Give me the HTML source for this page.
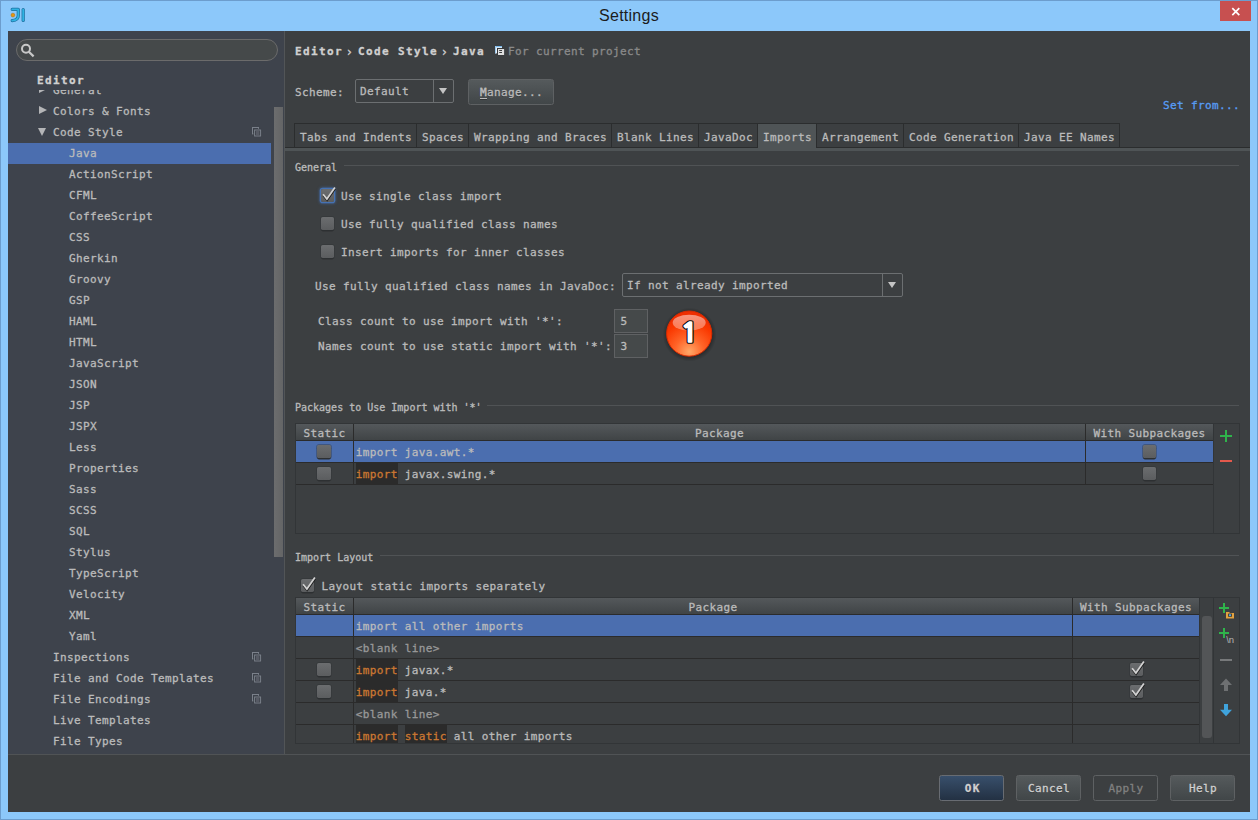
<!DOCTYPE html>
<html>
<head>
<meta charset="utf-8">
<title>Settings</title>
<style>
html,body{margin:0;padding:0;}
body{width:1258px;height:820px;overflow:hidden;background:#8cc8fa;position:relative;
 font-family:"DejaVu Sans Mono","Liberation Mono",monospace;font-size:11px;letter-spacing:0.378px;color:#bbbbbb;-webkit-text-stroke:0.3px;}
.abs{position:absolute;}
.t{position:absolute;white-space:pre;line-height:14px;height:14px;}
.b{font-weight:bold;letter-spacing:1.378px;}
.sm{font-size:10px;letter-spacing:0;}
#frame{position:absolute;left:0;top:0;width:1256px;height:818px;border:1px solid #6c9dcd;}
#title{position:absolute;left:0;top:5px;width:1258px;text-align:center;font-family:"Liberation Sans",sans-serif;font-size:16px;letter-spacing:0.25px;color:#1c1c1c;line-height:22px;-webkit-text-stroke:0;}
#close{position:absolute;left:1220px;top:1px;width:31px;height:20px;background:#c75050;}
#content{position:absolute;left:8px;top:31px;width:1242px;height:781px;background:#3c3f41;overflow:hidden;}
#abs0{position:absolute;left:-8px;top:-31px;width:1258px;height:820px;}
#side{position:absolute;left:8px;top:31px;width:276px;height:723px;background:#3e434c;overflow:hidden;}
#side2{position:absolute;left:-8px;top:-31px;width:1258px;height:820px;}
#search{position:absolute;left:16px;top:39px;width:260px;height:20px;border:1px solid #6b6b6b;border-radius:11px;background:#45494a;}
.row{position:absolute;left:8px;width:263px;height:21px;line-height:21px;white-space:pre;}
.row .rt{position:absolute;top:0;margin-left:-8px;}
.row i{position:absolute;margin-left:-8px;}
.row .pi{position:absolute;left:244px;top:5px;}
.sel{background:#4b6eaf;}
.ar{top:5px;width:0;height:0;border-left:8px solid #b4b5b7;border-top:4.75px solid transparent;border-bottom:4.75px solid transparent;}
.ad{top:6px;width:0;height:0;border-top:8px solid #b4b5b7;border-left:4.7px solid transparent;border-right:4.7px solid transparent;}
#edhdr{position:absolute;left:8px;top:66px;width:263px;height:24px;background:#3e434c;}
#sthumb{position:absolute;left:274px;top:107px;width:9px;height:450px;background:linear-gradient(90deg,#6c6d6e,#646566);}

.cb{position:absolute;width:13.2px;height:13px;margin:-0.4px 0 0 -0.2px;border-radius:1.8px;background:linear-gradient(#6b6d6f,#5b5d5f);box-shadow:0 0 0 0.7px rgba(46,49,51,0.5),0 1.4px 0.5px #2e3032;}
.combo{position:absolute;border:1px solid #6c6f71;border-radius:2px;background:#3c3f41;box-sizing:border-box;}
.combo .sep{position:absolute;top:0;bottom:0;width:1px;background:#6c6f71;}
.combo .arr{position:absolute;width:0;height:0;border-top:6px solid #c4c4c4;border-left:4px solid transparent;border-right:4px solid transparent;}
.btn{text-shadow:0 1px 0 rgba(0,0,0,0.3);position:absolute;box-sizing:border-box;border:1px solid #5e6163;border-radius:2.5px;background:linear-gradient(#555a5c,#414648);text-align:center;white-space:pre;padding-left:1px;}
.tab{position:absolute;top:123px;height:25px;box-sizing:border-box;border:1px solid #2b2d2e;border-right:none;line-height:27px;padding-left:5px;white-space:pre;}
.hl{position:absolute;height:1px;background:#505355;}
.tf{position:absolute;box-sizing:border-box;border:1px solid #5f6163;background:#45494a;}

.th{position:absolute;height:16px;border-bottom:1px solid #2b2b2b;background:linear-gradient(#54585b,#404446);line-height:19px;white-space:pre;text-align:center;}
.tr{position:absolute;height:21px;border-bottom:1px solid #2b2b2b;}
.kw{color:#cc7832;background:#2b2b2b;display:inline-block;height:21px;}
.cell{position:absolute;white-space:pre;line-height:23px;height:21px;}
.vl{position:absolute;width:1px;background:#2b2b2b;}
.tbl{position:absolute;box-sizing:border-box;border:1px solid #323537;}
</style>
</head>
<body>
<div id="frame"></div>
<div id="title">Settings</div>
<div id="close"><svg width="31" height="20" viewBox="0 0 31 20" style="position:absolute;left:0;top:0"><path d="M12.3 7.2L19.3 14.2M19.3 7.2L12.3 14.2" stroke="#fff" stroke-width="1.7"/></svg></div>
<svg class="abs" style="left:9px;top:6px" width="18" height="18" viewBox="0 0 18 18"><path d="M3.2 3.3H9.3V9.5C9.3 12.8 6.5 14.3 3.2 14.6" fill="none" stroke="#1d6e9e" stroke-width="3.2" stroke-linecap="round" stroke-linejoin="round"/><path d="M3.2 3.3H9.3V9.5C9.3 12.8 6.5 14.3 3.2 14.6" fill="none" stroke="#2fb2e2" stroke-width="1.8" stroke-linecap="round" stroke-linejoin="round"/><path d="M14.2 3.6V14.4" stroke="#1d6e9e" stroke-width="3.2" stroke-linecap="round"/><path d="M14.2 3.6V14.4" stroke="#2fb2e2" stroke-width="1.8" stroke-linecap="round"/><circle cx="3.9" cy="9.1" r="1.9" fill="#e8960c" stroke="#a86a10" stroke-width="0.5"/></svg>
<div id="content"><div id="abs0">
 <div id="side"><div id="side2">
  <div id="search"><svg width="20" height="20" viewBox="0 0 20 20" style="position:absolute;left:2px;top:0"><circle cx="7" cy="8.8" r="4" fill="none" stroke="#c8c8c8" stroke-width="2"/><path d="M9.8 11.8L14.6 16.4" stroke="#c8c8c8" stroke-width="2.2"/></svg></div>
<div class="row" style="top:80px"><span class="rt" style="left:53px">General</span><i class="ar" style="left:39px"></i></div>
<div class="row" style="top:101px"><span class="rt" style="left:53px">Colors &amp; Fonts</span><i class="ar" style="left:39px"></i></div>
<div class="row" style="top:122px"><span class="rt" style="left:53px">Code Style</span><i class="ad" style="left:38px"></i><svg class="pi" width="10" height="10" viewBox="0 0 10 10"><rect x="0.5" y="0.5" width="6" height="6.4" fill="none" stroke="#7a808a"/><rect x="1.4" y="1.8" width="8" height="8" fill="#3b3f47"/><rect x="2.6" y="3" width="6" height="6" fill="none" stroke="#7a808a"/><path d="M4 5h3.4M4 7h3.4" stroke="#7a808a" stroke-width="0.9"/></svg></div>
<div class="row sel" style="top:143px"><span class="rt" style="left:69px">Java</span></div>
<div class="row" style="top:164px"><span class="rt" style="left:69px">ActionScript</span></div>
<div class="row" style="top:185px"><span class="rt" style="left:69px">CFML</span></div>
<div class="row" style="top:206px"><span class="rt" style="left:69px">CoffeeScript</span></div>
<div class="row" style="top:227px"><span class="rt" style="left:69px">CSS</span></div>
<div class="row" style="top:248px"><span class="rt" style="left:69px">Gherkin</span></div>
<div class="row" style="top:269px"><span class="rt" style="left:69px">Groovy</span></div>
<div class="row" style="top:290px"><span class="rt" style="left:69px">GSP</span></div>
<div class="row" style="top:311px"><span class="rt" style="left:69px">HAML</span></div>
<div class="row" style="top:332px"><span class="rt" style="left:69px">HTML</span></div>
<div class="row" style="top:353px"><span class="rt" style="left:69px">JavaScript</span></div>
<div class="row" style="top:374px"><span class="rt" style="left:69px">JSON</span></div>
<div class="row" style="top:395px"><span class="rt" style="left:69px">JSP</span></div>
<div class="row" style="top:416px"><span class="rt" style="left:69px">JSPX</span></div>
<div class="row" style="top:437px"><span class="rt" style="left:69px">Less</span></div>
<div class="row" style="top:458px"><span class="rt" style="left:69px">Properties</span></div>
<div class="row" style="top:479px"><span class="rt" style="left:69px">Sass</span></div>
<div class="row" style="top:500px"><span class="rt" style="left:69px">SCSS</span></div>
<div class="row" style="top:521px"><span class="rt" style="left:69px">SQL</span></div>
<div class="row" style="top:542px"><span class="rt" style="left:69px">Stylus</span></div>
<div class="row" style="top:563px"><span class="rt" style="left:69px">TypeScript</span></div>
<div class="row" style="top:584px"><span class="rt" style="left:69px">Velocity</span></div>
<div class="row" style="top:605px"><span class="rt" style="left:69px">XML</span></div>
<div class="row" style="top:626px"><span class="rt" style="left:69px">Yaml</span></div>
<div class="row" style="top:647px"><span class="rt" style="left:53px">Inspections</span><svg class="pi" width="10" height="10" viewBox="0 0 10 10"><rect x="0.5" y="0.5" width="6" height="6.4" fill="none" stroke="#7a808a"/><rect x="1.4" y="1.8" width="8" height="8" fill="#3b3f47"/><rect x="2.6" y="3" width="6" height="6" fill="none" stroke="#7a808a"/><path d="M4 5h3.4M4 7h3.4" stroke="#7a808a" stroke-width="0.9"/></svg></div>
<div class="row" style="top:668px"><span class="rt" style="left:53px">File and Code Templates</span><svg class="pi" width="10" height="10" viewBox="0 0 10 10"><rect x="0.5" y="0.5" width="6" height="6.4" fill="none" stroke="#7a808a"/><rect x="1.4" y="1.8" width="8" height="8" fill="#3b3f47"/><rect x="2.6" y="3" width="6" height="6" fill="none" stroke="#7a808a"/><path d="M4 5h3.4M4 7h3.4" stroke="#7a808a" stroke-width="0.9"/></svg></div>
<div class="row" style="top:689px"><span class="rt" style="left:53px">File Encodings</span><svg class="pi" width="10" height="10" viewBox="0 0 10 10"><rect x="0.5" y="0.5" width="6" height="6.4" fill="none" stroke="#7a808a"/><rect x="1.4" y="1.8" width="8" height="8" fill="#3b3f47"/><rect x="2.6" y="3" width="6" height="6" fill="none" stroke="#7a808a"/><path d="M4 5h3.4M4 7h3.4" stroke="#7a808a" stroke-width="0.9"/></svg></div>
<div class="row" style="top:710px"><span class="rt" style="left:53px">Live Templates</span></div>
<div class="row" style="top:731px"><span class="rt" style="left:53px">File Types</span></div>
  <div id="edhdr"></div>
  <div class="t b" style="left:37px;top:74px;color:#d0d0d0">Editor</div>
  <div id="sthumb"></div>
 </div></div>

 <div id="main">
  <div class="abs" style="left:284px;top:31px;width:1px;height:723px;background:#525557"></div>
  <div class="t b" style="left:295px;top:45px;color:#d0d0d0">Editor</div>
  <div class="t" style="left:347px;top:45px;color:#d0d0d0;letter-spacing:0;font-size:12px;font-family:'DejaVu Sans',sans-serif">›</div>
  <div class="t b" style="left:358px;top:45px;color:#d0d0d0">Code Style</div>
  <div class="t" style="left:442px;top:45px;color:#d0d0d0;letter-spacing:0;font-size:12px;font-family:'DejaVu Sans',sans-serif">›</div>
  <div class="t b" style="left:453px;top:45px;color:#d0d0d0">Java</div>
  <svg class="abs" style="left:495px;top:46px" width="10" height="10" viewBox="0 0 10 10"><rect x="0" y="0" width="7" height="7.4" fill="#e8f0f8"/><rect x="0" y="0" width="7" height="1.2" fill="#7ab8ea"/><rect x="0" y="0" width="1" height="7.4" fill="#9ccaf0"/><rect x="2" y="2" width="7.2" height="7.2" fill="#35383a"/><rect x="3" y="3" width="6.1" height="6" fill="#dedede"/><path d="M4.2 4.5h2.8M4.2 6.5h2.8" stroke="#3a3d3f" stroke-width="1"/></svg>
  <div class="t" style="left:508px;top:45px;color:#8a8a8a">For current project</div>

  <div class="t" style="left:295px;top:86px">Scheme:</div>
  <div class="combo" style="left:355px;top:79px;width:99px;height:24px"><div class="t" style="left:4px;top:5px">Default</div><div class="sep" style="left:77px"></div><div class="arr" style="left:83px;top:8px"></div></div>
  <div class="btn" style="left:468px;top:79px;width:86px;height:26px;line-height:26px"><u style="text-underline-offset:2px;text-decoration-thickness:1px">M</u>anage...</div>
  <div class="t" style="left:1163px;top:99px;color:#589df6">Set from...</div>

  <div class="tab" style="left:294px;width:122px">Tabs and Indents</div>
  <div class="tab" style="left:416px;width:52px">Spaces</div>
  <div class="tab" style="left:468px;width:143px">Wrapping and Braces</div>
  <div class="tab" style="left:611px;width:87px">Blank Lines</div>
  <div class="tab" style="left:698px;width:59px">JavaDoc</div>
  <div class="tab" style="left:757px;width:59px;background:#4f5456;border-bottom:none">Imports</div>
  <div class="tab" style="left:816px;width:87px">Arrangement</div>
  <div class="tab" style="left:903px;width:115px">Code Generation</div>
  <div class="tab" style="left:1018px;width:102px;border-right:1px solid #2b2d2e">Java EE Names</div>
  <div class="abs" style="left:285px;top:147px;width:473px;height:1px;background:#2b2d2e"></div>
  <div class="abs" style="left:816px;top:147px;width:434px;height:1px;background:#2b2d2e"></div>
  <div class="abs" style="left:285px;top:148px;width:965px;height:3px;background:#4f5456"></div>

  <!-- General -->
  <div class="t sm" style="left:295px;top:161px">General</div>
  <div class="hl" style="left:344px;top:165px;width:895px"></div>
  <div class="cb" style="left:321px;top:189px;box-shadow:0 0 0 1.3px #4572b3,0 0 2.5px 1.8px rgba(69,114,179,0.45)"></div>
  <svg class="abs" style="left:320px;top:184px" width="18" height="18" viewBox="0 0 18 18"><path d="M3.1 10.2L6.9 15L14.9 3.5" fill="none" stroke="#1c1c1c" stroke-width="1.9" transform="translate(0.2,1.1)"/><path d="M3.1 10.2L6.9 15L14.9 3.5" fill="none" stroke="#d2d2d2" stroke-width="1.75"/></svg>
  <div class="t" style="left:341px;top:190px">Use single class import</div>
  <div class="cb" style="left:321px;top:217px"></div>
  <div class="t" style="left:341px;top:218px">Use fully qualified class names</div>
  <div class="cb" style="left:321px;top:245px"></div>
  <div class="t" style="left:341px;top:246px">Insert imports for inner classes</div>
  <div class="t" style="left:315px;top:280px">Use fully qualified class names in JavaDoc:</div>
  <div class="combo" style="left:622px;top:273px;width:281px;height:24px"><div class="t" style="left:4px;top:5px">If not already imported</div><div class="sep" style="left:259px"></div><div class="arr" style="left:265px;top:8px"></div></div>
  <div class="t" style="left:318px;top:315px">Class count to use import with '*':</div>
  <div class="tf" style="left:614px;top:309px;width:34px;height:24px"><div class="t" style="left:5.5px;top:5px">5</div></div>
  <div class="t" style="left:318px;top:340px">Names count to use static import with '*':</div>
  <div class="tf" style="left:614px;top:334px;width:34px;height:24px"><div class="t" style="left:5.5px;top:5px">3</div></div>

  <!-- ball -->
  <svg class="abs" style="left:660px;top:305px" width="60" height="60" viewBox="0 0 60 60">
   <defs>
    <radialGradient id="bg" cx="50%" cy="90%" r="80%"><stop offset="0" stop-color="#ffa868"/><stop offset="0.4" stop-color="#ff6428"/><stop offset="0.8" stop-color="#fa3800"/><stop offset="1" stop-color="#ee2e00"/></radialGradient>
    <linearGradient id="gl" x1="0" y1="0" x2="0" y2="1"><stop offset="0" stop-color="#fff" stop-opacity="0.5"/><stop offset="1" stop-color="#fff" stop-opacity="0.3"/></linearGradient>
    <radialGradient id="sh" cx="50%" cy="50%" r="50%"><stop offset="0.8" stop-color="#000" stop-opacity="0.35"/><stop offset="1" stop-color="#000" stop-opacity="0"/></radialGradient>
   </defs>
   <circle cx="29.6" cy="29.6" r="27" fill="url(#sh)"/>
   <circle cx="29.2" cy="28.6" r="22.6" fill="url(#bg)" stroke="#dc2a00" stroke-width="1"/>
   <ellipse cx="29.2" cy="17.7" rx="16.5" ry="8" fill="url(#gl)"/>
   <g style="font-family:'NanumGothic','Liberation Sans',sans-serif;font-weight:bold;font-size:26px;letter-spacing:0" text-anchor="middle" transform="translate(29.2 0) scale(1.12 1) translate(-29.2 0)"><text x="29.4" y="37" fill="#111" stroke="#111" stroke-width="3.6" stroke-linejoin="miter">1</text><text x="29.4" y="37" fill="#fff" stroke="#fff" stroke-width="1.4" stroke-linejoin="miter">1</text></g>
  </svg>

  <!-- Packages table -->
  <div class="t sm" style="left:295px;top:401px">Packages to Use Import with '*'</div>
  <div class="hl" style="left:487px;top:405px;width:752px"></div>
  <div class="tbl" style="left:295px;top:423px;width:945px;height:111px"></div>
  <div class="th" style="left:296px;top:424px;width:57px">Static</div>
  <div class="th" style="left:354px;top:424px;width:731px">Package</div>
  <div class="th" style="left:1086px;top:424px;width:127px">With Subpackages</div>
  <div class="abs" style="left:296px;top:441px;width:917px;height:21px;background:#4b6eaf"></div>
  <div class="abs" style="left:296px;top:462px;width:917px;height:1px;background:#2b2b2b"></div>
  <div class="abs" style="left:296px;top:484px;width:917px;height:1px;background:#2b2b2b"></div>
  <div class="vl" style="left:353px;top:424px;height:61px"></div>
  <div class="vl" style="left:1085px;top:424px;height:61px"></div>
  <div class="vl" style="left:1213px;top:424px;height:109px;background:#323537"></div>
  <div class="cb" style="left:317.6px;top:445px"></div>
  <div class="cb" style="left:317.6px;top:467px"></div>
  <div class="cb" style="left:1143px;top:445px"></div>
  <div class="cb" style="left:1143px;top:467px"></div>
  <div class="cell" style="left:355.8px;top:441px">import java.awt.*</div>
  <div class="cell" style="left:355.8px;top:463px"><span class="kw">import</span> javax.swing.*</div>
  <svg class="abs" style="left:1219px;top:429px" width="14" height="14" viewBox="0 0 14 14"><path d="M7 1v12M1 7h12" stroke="#2fb44b" stroke-width="2"/></svg>
  <div class="abs" style="left:1220px;top:460px;width:12px;height:2px;background:#e4594c"></div>

  <!-- Import layout -->
  <div class="t sm" style="left:295px;top:551px">Import Layout</div>
  <div class="hl" style="left:380px;top:555px;width:859px"></div>
  <div class="cb" style="left:301px;top:579px"></div>
  <svg class="abs" style="left:300px;top:574px" width="18" height="18" viewBox="0 0 18 18"><path d="M3.1 10.2L6.9 15L14.9 3.5" fill="none" stroke="#1c1c1c" stroke-width="1.9" transform="translate(0.2,1.1)"/><path d="M3.1 10.2L6.9 15L14.9 3.5" fill="none" stroke="#d2d2d2" stroke-width="1.75"/></svg>
  <div class="t" style="left:321.6px;top:580px">Layout static imports separately</div>
  <div class="tbl" style="left:295px;top:597px;width:945px;height:147px"></div>
  <div class="th" style="left:296px;top:598px;width:57px">Static</div>
  <div class="th" style="left:354px;top:598px;width:718px">Package</div>
  <div class="th" style="left:1073px;top:598px;width:126px">With Subpackages</div>
  <div class="abs" style="left:296px;top:615px;width:903px;height:21px;background:#4b6eaf"></div>
  <div class="abs" style="left:296px;top:636px;width:903px;height:1px;background:#2b2b2b"></div>
  <div class="abs" style="left:296px;top:658px;width:903px;height:1px;background:#2b2b2b"></div>
  <div class="abs" style="left:296px;top:680px;width:903px;height:1px;background:#2b2b2b"></div>
  <div class="abs" style="left:296px;top:702px;width:903px;height:1px;background:#2b2b2b"></div>
  <div class="abs" style="left:296px;top:724px;width:903px;height:1px;background:#2b2b2b"></div>
  <div class="vl" style="left:353px;top:598px;height:145px"></div>
  <div class="vl" style="left:1072px;top:598px;height:145px"></div>
  <div class="vl" style="left:1199px;top:598px;height:145px;background:#323537"></div>
  <div class="vl" style="left:1213px;top:598px;height:145px;background:#323537"></div>
  <div class="abs" style="left:1202px;top:616px;width:10px;height:122px;border-radius:3px;background:#535557"></div>
  <div class="cell" style="left:355.8px;top:615px">import all other imports</div>
  <div class="cell" style="left:355.8px;top:637px;color:#999">&lt;blank line&gt;</div>
  <div class="cell" style="left:355.8px;top:659px"><span class="kw">import</span> javax.*</div>
  <div class="cell" style="left:355.8px;top:681px"><span class="kw">import</span> java.*</div>
  <div class="cell" style="left:355.8px;top:703px;color:#999">&lt;blank line&gt;</div>
  <div class="cell" style="left:355.8px;top:725px;height:18px;overflow:hidden"><span class="kw">import</span> <span class="kw">static</span> all other imports</div>
  <div class="cb" style="left:317.6px;top:663px"></div>
  <div class="cb" style="left:317.6px;top:685px"></div>
  <div class="cb" style="left:1130px;top:663px"></div>
  <svg class="abs" style="left:1129px;top:658px" width="18" height="18" viewBox="0 0 18 18"><path d="M3.1 10.2L6.9 15L14.9 3.5" fill="none" stroke="#1c1c1c" stroke-width="1.9" transform="translate(0.2,1.1)"/><path d="M3.1 10.2L6.9 15L14.9 3.5" fill="none" stroke="#d2d2d2" stroke-width="1.75"/></svg>
  <div class="cb" style="left:1130px;top:685px"></div>
  <svg class="abs" style="left:1129px;top:680px" width="18" height="18" viewBox="0 0 18 18"><path d="M3.1 10.2L6.9 15L14.9 3.5" fill="none" stroke="#1c1c1c" stroke-width="1.9" transform="translate(0.2,1.1)"/><path d="M3.1 10.2L6.9 15L14.9 3.5" fill="none" stroke="#d2d2d2" stroke-width="1.75"/></svg>
  <!-- toolbar icons -->
  <svg class="abs" style="left:1216px;top:600px" width="22" height="22" viewBox="0 0 22 22"><path d="M8 3v10M3 8h10" stroke="#2fb44b" stroke-width="2"/><path d="M10 12h3l1 1h4v5.5h-8z" fill="#e2a240"/><rect x="12.2" y="13.6" width="3.6" height="3.2" fill="#2d2d2d"/><rect x="13" y="14.2" width="2" height="2" fill="#4da4e6"/></svg>
  <svg class="abs" style="left:1216px;top:625px" width="22" height="22" viewBox="0 0 22 22"><path d="M8 3v10M3 8h10" stroke="#2fb44b" stroke-width="2"/><text x="10.2" y="17.6" style="font-family:'Liberation Sans',sans-serif;font-size:9.5px;letter-spacing:0" fill="#b4b4b4">\n</text></svg>
  <div class="abs" style="left:1220px;top:659px;width:12px;height:2px;background:#77797b"></div>
  <svg class="abs" style="left:1219px;top:678px" width="14" height="14" viewBox="0 0 14 14"><path d="M7 0.5L13 7H9V13H5V7H1Z" fill="#6e7072"/></svg>
  <svg class="abs" style="left:1219px;top:703px" width="14" height="14" viewBox="0 0 14 14"><path d="M7 13.2L13 6.8H9V1H5V6.8H1Z" fill="#3fa3dc"/></svg>

  <!-- bottom -->
  <div class="abs" style="left:8px;top:754px;width:1242px;height:1px;background:#505355"></div>
  <div class="btn" style="left:939px;top:775px;width:65px;height:26px;line-height:25px;background:linear-gradient(#384f6b,#233143);border-color:#686c72;color:#d0d0d0;font-weight:bold;letter-spacing:1.378px;padding-left:2.5px">OK</div>
  <div class="btn" style="left:1016px;top:775px;width:65px;height:26px;line-height:25px;color:#d0d0d0">Cancel</div>
  <div class="btn" style="left:1093px;top:775px;width:65px;height:26px;line-height:25px;background:#3c3f41;color:#808080;text-shadow:none">Apply</div>
  <div class="btn" style="left:1170px;top:775px;width:65px;height:26px;line-height:25px;color:#d0d0d0">Help</div>
 </div>
</div></div>
</body>
</html>
